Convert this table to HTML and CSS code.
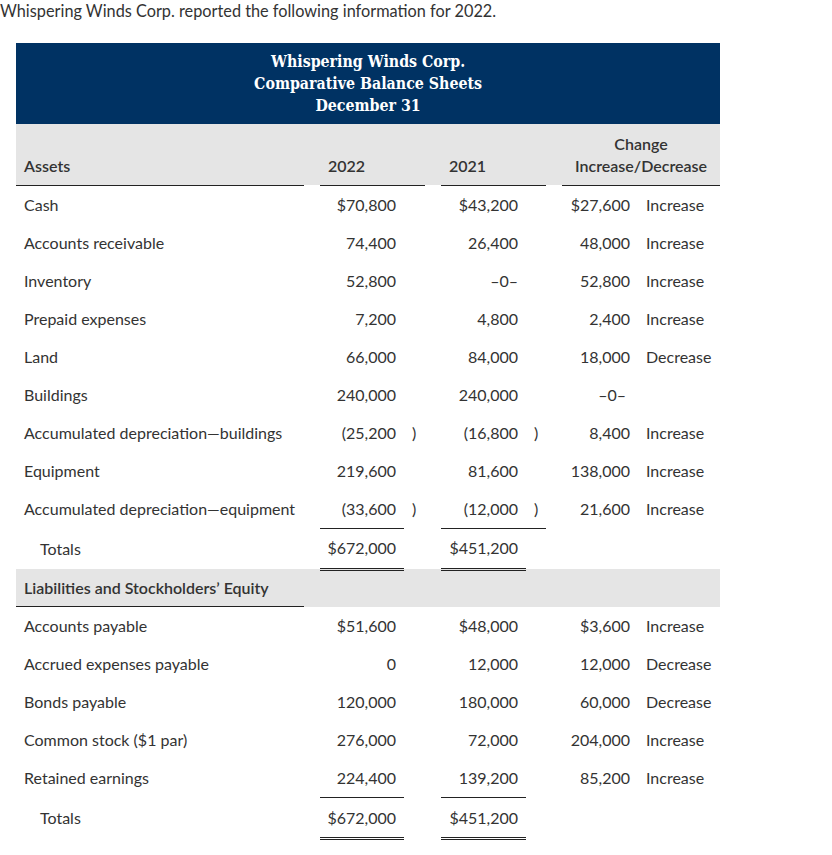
FILE: index.html
```html
<!DOCTYPE html>
<html>
<head>
<meta charset="utf-8">
<link rel="stylesheet" href="styles.css">
</head>
<body>
<p class="intro">Whispering Winds Corp. reported the following information for 2022.</p>
<table class="bs">
  <colgroup>
    <col class="w-label"><col class="w-gap"><col class="w-v1"><col class="w-p1"><col class="w-gap"><col class="w-v2"><col class="w-p2"><col class="w-gap"><col class="w-amt"><col class="w-word">
  </colgroup>
  <thead>
    <tr class="title"><th colspan="10">Whispering Winds Corp.<br>Comparative Balance Sheets<br>December 31</th></tr>
    <tr class="head">
      <th class="lab ul">Assets</th><th></th>
      <th class="yr ul" colspan="2">2022</th><th></th>
      <th class="yr ul" colspan="2">2021</th><th></th>
      <th class="chg ul" colspan="2">Change<br>Increase/Decrease</th>
    </tr>
  </thead>
  <tbody>
    <tr><td class="lab">Cash</td><td></td><td class="num">$70,800</td><td></td><td></td><td class="num">$43,200</td><td></td><td></td><td class="num">$27,600</td><td class="word">Increase</td></tr>
    <tr><td class="lab">Accounts receivable</td><td></td><td class="num">74,400</td><td></td><td></td><td class="num">26,400</td><td></td><td></td><td class="num">48,000</td><td class="word">Increase</td></tr>
    <tr><td class="lab">Inventory</td><td></td><td class="num">52,800</td><td></td><td></td><td class="num">–0–</td><td></td><td></td><td class="num">52,800</td><td class="word">Increase</td></tr>
    <tr><td class="lab">Prepaid expenses</td><td></td><td class="num">7,200</td><td></td><td></td><td class="num">4,800</td><td></td><td></td><td class="num">2,400</td><td class="word">Increase</td></tr>
    <tr><td class="lab">Land</td><td></td><td class="num">66,000</td><td></td><td></td><td class="num">84,000</td><td></td><td></td><td class="num">18,000</td><td class="word">Decrease</td></tr>
    <tr><td class="lab">Buildings</td><td></td><td class="num">240,000</td><td></td><td></td><td class="num">240,000</td><td></td><td></td><td class="num zero">–0–</td><td class="word"></td></tr>
    <tr><td class="lab">Accumulated depreciation—buildings</td><td></td><td class="num">(25,200</td><td class="par">)</td><td></td><td class="num">(16,800</td><td class="par">)</td><td></td><td class="num">8,400</td><td class="word">Increase</td></tr>
    <tr><td class="lab">Equipment</td><td></td><td class="num">219,600</td><td></td><td></td><td class="num">81,600</td><td></td><td></td><td class="num">138,000</td><td class="word">Increase</td></tr>
    <tr><td class="lab">Accumulated depreciation—equipment</td><td></td><td class="num">(33,600</td><td class="par">)</td><td></td><td class="num">(12,000</td><td class="par">)</td><td></td><td class="num">21,600</td><td class="word">Increase</td></tr>
    <tr class="total"><td class="lab indent">Totals</td><td></td><td class="num tl dbl">$672,000</td><td></td><td></td><td class="num tl dbl">$451,200</td><td class="tl"></td><td></td><td></td><td></td></tr>
    <tr class="section"><td class="lab ul">Liabilities and Stockholders’ Equity</td><td colspan="9"></td></tr>
    <tr><td class="lab">Accounts payable</td><td></td><td class="num">$51,600</td><td></td><td></td><td class="num">$48,000</td><td></td><td></td><td class="num">$3,600</td><td class="word">Increase</td></tr>
    <tr><td class="lab">Accrued expenses payable</td><td></td><td class="num">0</td><td></td><td></td><td class="num">12,000</td><td></td><td></td><td class="num">12,000</td><td class="word">Decrease</td></tr>
    <tr><td class="lab">Bonds payable</td><td></td><td class="num">120,000</td><td></td><td></td><td class="num">180,000</td><td></td><td></td><td class="num">60,000</td><td class="word">Decrease</td></tr>
    <tr><td class="lab">Common stock ($1 par)</td><td></td><td class="num">276,000</td><td></td><td></td><td class="num">72,000</td><td></td><td></td><td class="num">204,000</td><td class="word">Increase</td></tr>
    <tr><td class="lab">Retained earnings</td><td></td><td class="num">224,400</td><td></td><td></td><td class="num">139,200</td><td></td><td></td><td class="num">85,200</td><td class="word">Increase</td></tr>
    <tr class="total"><td class="lab indent">Totals</td><td></td><td class="num tl dbl">$672,000</td><td></td><td></td><td class="num tl dbl">$451,200</td><td></td><td></td><td></td><td></td></tr>
  </tbody>
</table>
</body>
</html>
```
FILE: styles.css
```css
html, body {
  margin: 0;
  padding: 0;
  background: #fff;
}
body {
  font-family: Lato, "Liberation Sans", sans-serif;
  color: #333;
  font-size: 16px;
}
.intro {
  margin: 0;
  padding: 1px 0 0 0;
  line-height: 20px;
  font-size: 16.3px;
}
.bs {
  margin: 22px 0 0 16px;
  border-collapse: collapse;
  table-layout: fixed;
  width: 704px;
}
.w-label { width: 288px; }
.w-gap { width: 16px; }
.w-v1 { width: 84px; }
.w-p1 { width: 21px; }
.w-v2 { width: 85px; }
.w-p2 { width: 20px; }
.w-amt { width: 76px; }
.w-word { width: 82px; }
.bs th, .bs td {
  padding: 0;
  font-weight: normal;
}
.title th {
  background: #003263;
  color: #fff;
  font-family: "DejaVu Serif Condensed", "DejaVu Serif", serif;
  font-weight: bold;
  font-size: 15.8px;
  line-height: 22px;
  height: 81px;
  text-align: center;
  vertical-align: top;
  padding-top: 8px;
  box-sizing: border-box;
}
.head th {
  background: #e5e5e5;
  height: 61px;
  vertical-align: bottom;
  padding-bottom: 8px;
  font-weight: 600;
  line-height: 22px;
  color: #333;
  box-sizing: border-box;
}
.head .lab { text-align: left; padding-left: 8px; }
.head .yr { text-align: left; padding-left: 8px; }
.head .chg { text-align: center; }
.ul { border-bottom: 1px solid #222; }
.bs tbody td {
  height: 38px;
  line-height: 20px;
  vertical-align: middle;
}
.lab { text-align: left; padding-left: 8px !important; }
.indent { padding-left: 24px !important; }
.num { text-align: right; padding-right: 8px !important; }
.par { text-align: left; padding-left: 8px !important; }
.word { text-align: left; padding-left: 8px !important; }
.zero { text-align: right; padding-right: 12px !important; }
.total td { height: 39px !important; }
.total td.tl { border-top: 1px solid #222; }
.total td.dbl { border-bottom: 3px double #222; }
.section td {
  background: #e5e5e5;
  height: 36px !important;
}
.section td.lab { font-weight: 600; }
```
